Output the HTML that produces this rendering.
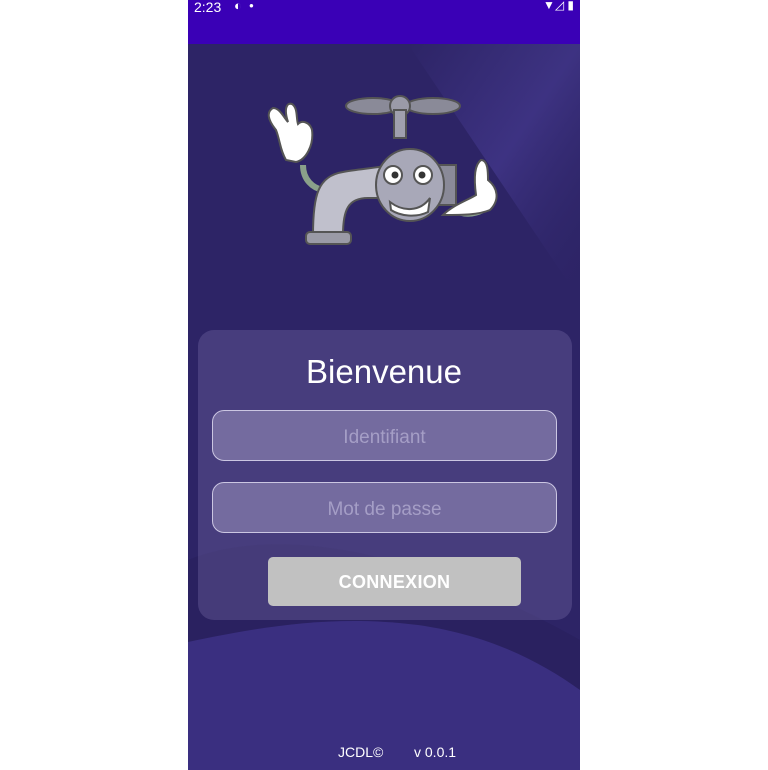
<!DOCTYPE html>
<html><head><meta charset="utf-8"><style>
html,body{margin:0;padding:0;background:#fff;width:768px;height:770px;overflow:hidden;font-family:"Liberation Sans",sans-serif}
#ph{position:absolute;left:188px;top:0;width:392px;height:770px;background:#2d2466;overflow:hidden}
#sb{position:absolute;left:0;top:0;width:392px;height:44px;background:#3a00b6;color:#fff;font-size:14px}
.card{position:absolute;left:10px;top:330px;width:374px;height:290px;border-radius:16px;background:rgba(120,110,170,0.35)}
.inp{position:absolute;left:24px;width:343px;height:49px;border:1.5px solid #cbc6e2;border-radius:12px;background:#746b9f;color:#a59ec6;font-size:19px;text-align:center;line-height:53px}
.btn{position:absolute;left:80px;top:557px;width:253px;height:49px;border-radius:5px;background:#c1c1c1;color:#fff;font-size:18px;font-weight:bold;text-align:center;line-height:51px;letter-spacing:0.3px}
</style></head><body>
<div id="ph">
<svg width="392" height="770" style="position:absolute;left:0;top:0">
<defs><linearGradient id="g" x1="0" y1="0" x2="1" y2="1"><stop offset="0" stop-color="#3f3485" stop-opacity="0"/><stop offset="0.5" stop-color="#3f3485" stop-opacity="0.9"/><stop offset="1" stop-color="#2d2466" stop-opacity="0"/></linearGradient></defs>
<path d="M220 44 L392 44 L392 300 Z" fill="url(#g)"/>
<path d="M0 560 C100 520 250 560 392 640 L392 770 L0 770 Z" fill="#2a2160"/>
<path d="M0 642 C80 625 150 615 230 625 C300 635 350 660 392 690 L392 770 L0 770 Z" fill="#3a2f80"/>
<!-- faucet -->
<g stroke="#555" stroke-width="2">
<ellipse cx="185" cy="106" rx="27" ry="8" fill="#8a8a98"/>
<ellipse cx="245" cy="106" rx="27" ry="8" fill="#8a8a98"/>
<circle cx="212" cy="106" r="10" fill="#9a9aa8"/>
<rect x="206" y="110" width="12" height="28" fill="#a0a0ae"/>
<path d="M115 165 C115 180 125 188 135 190" stroke="#8aa08a" stroke-width="6" fill="none"/>
<path d="M265 210 C275 215 285 215 295 210" stroke="#8aa08a" stroke-width="6" fill="none"/>
<path d="M220 160 C200 168 175 168 155 172 C130 176 125 195 125 235 L155 235 C155 210 160 198 180 198 L235 198 Z" fill="#c0c0cc"/>
<rect x="118" y="232" width="45" height="12" rx="4" fill="#9a9aa6"/>
<path d="M232 165 L268 165 L268 205 L232 205 Z" fill="#8a8a98"/>
<ellipse cx="222" cy="185" rx="34" ry="36" fill="#a8a8b8"/>
<circle cx="205" cy="175" r="9" fill="#fff"/><circle cx="235" cy="175" r="9" fill="#fff"/>
<circle cx="207" cy="175" r="3.5" fill="#333" stroke="none"/><circle cx="234" cy="175" r="3.5" fill="#333" stroke="none"/>
<path d="M202 202 C215 212 232 212 242 198 L240 212 C228 218 212 216 203 210 Z" fill="#fff"/>
<path d="M88 130 C80 120 78 112 85 108 C92 108 96 118 100 122 C96 110 98 102 104 104 C110 108 108 118 110 124 C114 120 122 122 124 130 C126 145 118 160 108 162 L98 160 C92 150 92 140 88 130 Z" fill="#fff"/>
<path d="M255 215 C265 205 280 200 288 195 C286 180 286 165 293 160 C300 160 300 172 300 180 C310 188 312 200 302 210 C290 215 275 215 255 215 Z" fill="#fff"/>
</g>
</svg>
<div id="sb"><span style="position:absolute;left:6px;top:-1px">2:23</span><span style="position:absolute;left:46px;top:-2px;font-size:13px">◐ &nbsp;•</span><span style="position:absolute;right:6px;top:-2px;font-size:12px">▼◿ ▮</span></div>
<div class="card"></div>
<div style="position:absolute;left:0;width:392px;top:353px;text-align:center;color:#fff;font-size:33px">Bienvenue</div>
<div class="inp" style="top:410px">Identifiant</div>
<div class="inp" style="top:482px">Mot de passe</div>
<div class="btn">CONNEXION</div>
<div style="position:absolute;left:150px;top:744px;color:#fff;font-size:14px">JCDL©</div>
<div style="position:absolute;left:226px;top:744px;color:#fff;font-size:14px">v 0.0.1</div>
</div>
</body></html>
